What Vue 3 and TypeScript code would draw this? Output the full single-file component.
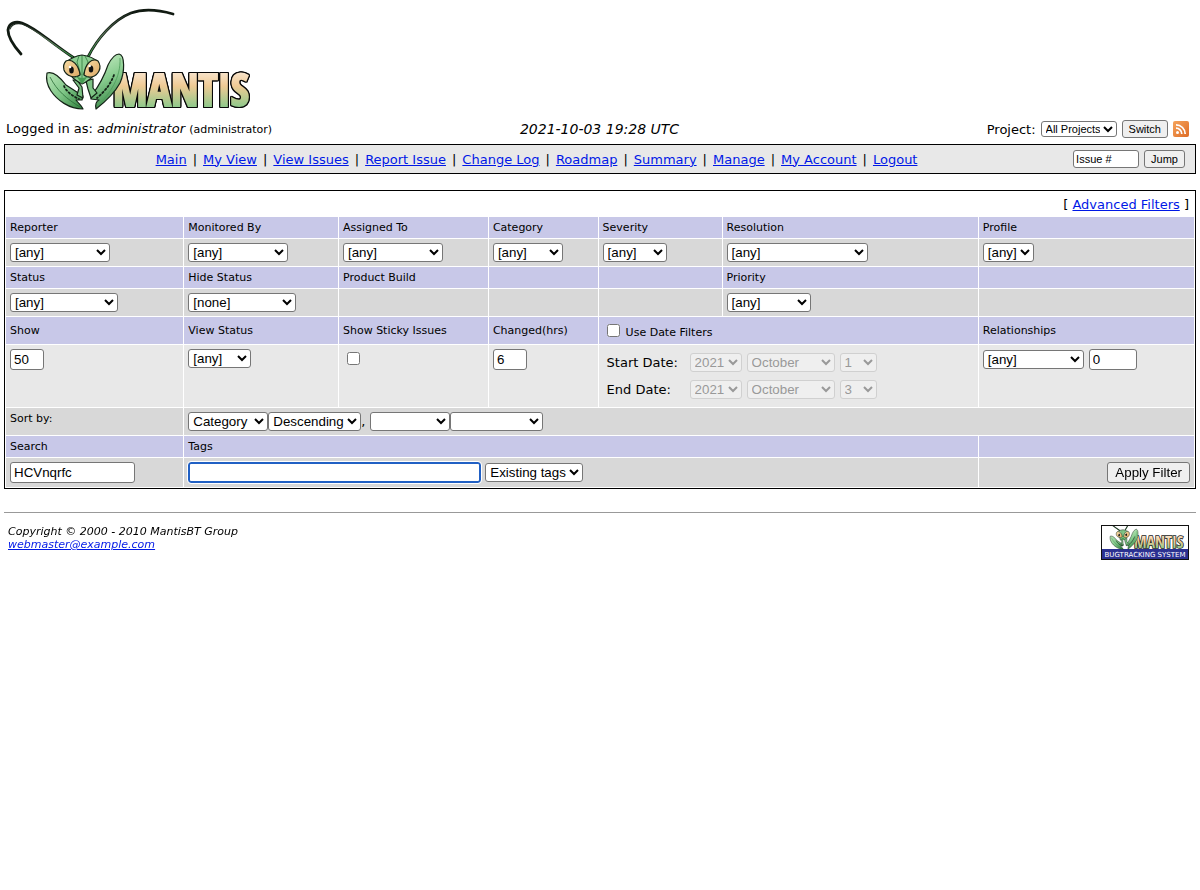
<script setup lang="ts">
import { onMounted, ref } from 'vue'

const menu: string[] = [
  'Main', 'My View', 'View Issues', 'Report Issue', 'Change Log',
  'Roadmap', 'Summary', 'Manage', 'My Account', 'Logout',
]
const dates = [
  { key: 'start', label: 'Start Date:', day: '1' },
  { key: 'end', label: 'End Date:', day: '3' },
]
const issue = ref('Issue #')
const show = ref('50')
const changed = ref('6')
const relation = ref('0')
const search = ref('HCVnqrfc')
const tags = ref('')
const tagBox = ref<HTMLInputElement | null>(null)

onMounted(() => tagBox.value?.focus())
</script>

<template>
  <div class="page">
    <svg width="0" height="0" class="defs" aria-hidden="true">
      <defs>
        <linearGradient id="word" x1="0" y1="0" x2="0" y2="1">
          <stop offset="0.2" stop-color="#f9e6d0" />
          <stop offset="0.45" stop-color="#efca94" />
          <stop offset="0.8" stop-color="#8fc98b" />
        </linearGradient>
        <linearGradient id="leaf" x1="0" y1="0" x2="1" y2="1">
          <stop offset="0" stop-color="#b9e6b8" />
          <stop offset="0.5" stop-color="#7fc687" />
          <stop offset="1" stop-color="#2f7f3c" />
        </linearGradient>
        <linearGradient id="leafRight" x1="0.2" y1="0" x2="0.5" y2="1">
          <stop offset="0" stop-color="#c6ecc3" />
          <stop offset="0.5" stop-color="#86cb8d" />
          <stop offset="1" stop-color="#398747" />
        </linearGradient>
        <linearGradient id="eye" x1="0" y1="0" x2="1" y2="1">
          <stop offset="0" stop-color="#f8dda6" />
          <stop offset="1" stop-color="#dca763" />
        </linearGradient>
        <linearGradient id="feeler" x1="0" y1="0" x2="0" y2="1">
          <stop offset="0" stop-color="#1b261c" />
          <stop offset="0.5" stop-color="#5b7a5b" />
          <stop offset="1" stop-color="#2f8a3d" />
        </linearGradient>
        <linearGradient id="rssFill" x1="0" y1="0" x2="1" y2="1">
          <stop offset="0" stop-color="#f5a45c" />
          <stop offset="1" stop-color="#de6c26" />
        </linearGradient>
        <g id="mantis">
          <g fill="none" stroke-linecap="round">
            <path d="M21 54C12 44 8 36 8 30C9 23 15 21 22 23C36 28 46 39 74 58" stroke="#111a12" stroke-width="2.8" />
            <path d="M10 29C12 24 17 23 22 24C36 29 46 40 74 58" stroke="url(#feeler)" stroke-width="1.2" />
            <path d="M88 57C97 39 113 20 131 13C145 8 159 10 173 14" stroke="#111a12" stroke-width="2.8" />
            <path d="M88 57C97 39 113 20 131 13" stroke="url(#feeler)" stroke-width="1.2" />
          </g>
          <g stroke="#142317" stroke-width="1.2" stroke-linejoin="round">
            <path d="M119 54C125 55 125 72 120 83C114 94 105 102 96 109C95 104 97 101 99 100L91 99L92 95C98 87 104 77 108 65C111 59 115 54 119 54Z" fill="url(#leafRight)" />
            <path d="M120 58C121 78 110 93 98 106" fill="none" stroke="#4d9a59" stroke-width="0.8" />
            <path d="M47 73C53 71 60 77 66 85L83 96L82 100L76 100C79 104 82 106 83 109C69 109 57 100 51 91C47 85 46 78 47 73Z" fill="url(#leaf)" />
            <path d="M50 77C57 91 67 99 80 107" fill="none" stroke="#2b6c37" stroke-width="0.8" />
            <path d="M77 80L82 87L83 98L77 95L79 88L73 80Z" fill="#7dc384" />
            <path d="M86 81L93 79L93 88L97 93L91 98L88 89Z" fill="#7dc384" />
          </g>
          <g fill="none" stroke="#142317" stroke-width="1.8" stroke-linecap="round" stroke-dasharray="1.6 2.4">
            <path d="M64 86C66 91 72 96 79 99" />
            <path d="M114 75C110 85 105 91 97 98" />
          </g>
          <g stroke="#142317" stroke-width="1.2" stroke-linejoin="round">
            <path d="M66 62C70 59 74 56 82 55C90 56 95 59 98 62C98 71 93 79 82 84C72 79 66 72 66 62Z" fill="#8ccf92" />
            <path d="M82 56V82M79 56L77 62L81 75M85 56L88 62L83 75" fill="none" stroke="#317a3e" stroke-width="0.8" />
            <path d="M66 61C72 58 79 65 80 75C75 79 66 76 64 70C63 66 64 63 66 61Z" fill="url(#eye)" />
            <path d="M98 61C92 57 85 64 84 75C89 79 96 77 99 71C101 67 100 64 98 61Z" fill="url(#eye)" />
            <path d="M76 76Q82 80 88 76L82 84Z" fill="#479d53" stroke="none" />
          </g>
          <ellipse cx="71.5" cy="70" rx="2.3" ry="3.6" fill="#101010" />
          <ellipse cx="91" cy="69" rx="2.3" ry="3.6" fill="#101010" />
          <circle cx="70" cy="67" r="1.3" fill="#fff" />
          <circle cx="89.6" cy="66" r="1.3" fill="#fff" />
        </g>
      </defs>
    </svg>

    <header>
      <svg class="logo" viewBox="4 4 260 114" role="img" aria-label="Mantis">
        <text x="113" y="106" class="wordmark">MANTIS</text>
        <use href="#mantis" />
      </svg>
    </header>

    <div class="status">
      <div>Logged in as: <i>administrator</i> <small>(administrator)</small></div>
      <i class="clock">2021-10-03 19:28 UTC</i>
      <form class="project" @submit.prevent>
        <label for="project">Project:</label>
        <select id="project" class="mini"><option>All Projects</option></select>
        <button class="mini-btn">Switch</button>
        <a href="#rss" class="rss" aria-label="RSS">
          <svg viewBox="0 0 16 16">
            <rect width="16" height="16" rx="2" fill="url(#rssFill)" />
            <circle cx="4.5" cy="11.5" r="1.5" fill="#fff" />
            <path d="M3 7.2A5.8 5.8 0 0 1 8.8 13M3 3.8A9.2 9.2 0 0 1 12.2 13" fill="none" stroke="#fff" stroke-width="1.7" />
          </svg>
        </a>
      </form>
    </div>

    <div class="bar">
      <nav>
        <template v-for="(item, i) in menu" :key="item">
          <span v-if="i">|</span>
          <a href="#">{{ item }}</a>
        </template>
      </nav>
      <form class="jump" @submit.prevent>
        <input v-model="issue" class="mini-input" aria-label="Issue number">
        <button class="mini-btn">Jump</button>
      </form>
    </div>

    <form @submit.prevent>
      <table class="filters">
        <colgroup>
          <col class="c1"><col class="c2"><col class="c3"><col class="c4"><col class="c5"><col class="c6"><col>
        </colgroup>
        <tbody>
          <tr>
            <td colspan="7" class="advanced">[ <a href="#">Advanced Filters</a> ]</td>
          </tr>
          <tr class="head">
            <td><label for="reporter">Reporter</label></td>
            <td><label for="monitor">Monitored By</label></td>
            <td><label for="assigned">Assigned To</label></td>
            <td><label for="category">Category</label></td>
            <td><label for="severity">Severity</label></td>
            <td><label for="resolution">Resolution</label></td>
            <td><label for="profile">Profile</label></td>
          </tr>
          <tr class="dark">
            <td><select id="reporter" class="w100"><option>[any]</option></select></td>
            <td><select id="monitor" class="w100"><option>[any]</option></select></td>
            <td><select id="assigned" class="w100"><option>[any]</option></select></td>
            <td><select id="category" class="w70"><option>[any]</option></select></td>
            <td><select id="severity" class="w64"><option>[any]</option></select></td>
            <td><select id="resolution" class="w141"><option>[any]</option></select></td>
            <td><select id="profile" class="w51"><option>[any]</option></select></td>
          </tr>
          <tr class="head">
            <td><label for="state">Status</label></td>
            <td><label for="hide">Hide Status</label></td>
            <td>Product Build</td>
            <td></td>
            <td></td>
            <td><label for="priority">Priority</label></td>
            <td></td>
          </tr>
          <tr class="dark">
            <td><select id="state" class="w108"><option>[any]</option></select></td>
            <td><select id="hide" class="w108"><option>[none]</option></select></td>
            <td></td>
            <td></td>
            <td></td>
            <td><select id="priority" class="w84"><option>[any]</option></select></td>
            <td></td>
          </tr>
          <tr class="head tall">
            <td><label for="show">Show</label></td>
            <td><label for="view">View Status</label></td>
            <td><label for="sticky">Show Sticky Issues</label></td>
            <td><label for="changed">Changed(hrs)</label></td>
            <td colspan="2">
              <div class="check"><input id="usedate" type="checkbox"><label for="usedate">Use Date Filters</label></div>
            </td>
            <td><label for="relation">Relationships</label></td>
          </tr>
          <tr class="light">
            <td><input id="show" v-model="show" class="w34"></td>
            <td><select id="view" class="w63"><option>[any]</option></select></td>
            <td><input id="sticky" type="checkbox"></td>
            <td><input id="changed" v-model="changed" class="w34"></td>
            <td colspan="2">
              <div v-for="d in dates" :key="d.key" class="date">
                <label :for="d.key">{{ d.label }}</label>
                <select :id="d.key" class="w52" disabled><option>2021</option></select>
                <select class="w88" disabled :aria-label="d.label + ' month'"><option>October</option></select>
                <select class="w37" disabled :aria-label="d.label + ' day'"><option>{{ d.day }}</option></select>
              </div>
            </td>
            <td>
              <div class="line">
                <select id="relation" class="w101"><option>[any]</option></select>
                <input v-model="relation" class="w48" aria-label="Related issue">
              </div>
            </td>
          </tr>
          <tr class="dark">
            <td><label for="sort">Sort by:</label></td>
            <td colspan="6">
              <div class="sort">
                <select id="sort" class="w80"><option>Category</option></select>
                <select class="w93" aria-label="Sort direction"><option>Descending</option></select>
                <span class="comma">,</span>
                <select class="w80" aria-label="Second sort field"><option></option></select>
                <select class="w93" aria-label="Second sort direction"><option></option></select>
              </div>
            </td>
          </tr>
          <tr class="head">
            <td><label for="search">Search</label></td>
            <td colspan="5"><label for="tags">Tags</label></td>
            <td></td>
          </tr>
          <tr class="dark">
            <td><input id="search" v-model="search" class="w125"></td>
            <td colspan="5">
              <div class="line tag-line">
                <input id="tags" ref="tagBox" v-model="tags" class="w293">
                <select class="w98" aria-label="Existing tags"><option>Existing tags</option></select>
              </div>
            </td>
            <td class="right"><button class="apply">Apply Filter</button></td>
          </tr>
        </tbody>
      </table>
    </form>

    <footer>
      <address>
        Copyright © 2000 - 2010 MantisBT Group<br>
        <a href="mailto:webmaster@example.com">webmaster@example.com</a>
      </address>
      <a href="#" class="badge" aria-label="Mantis Bugtracking System">
        <svg viewBox="0 0 88 35">
          <rect width="88" height="35" fill="#111" />
          <rect x="1" y="1" width="86" height="23" fill="#fff" />
          <rect x="1" y="24" width="86" height="10" fill="#2b3191" />
          <text x="33" y="23" class="badge-word">MANTIS</text>
          <svg x="1" y="1" width="44" height="24" viewBox="40 45 90 66">
            <use href="#mantis" />
          </svg>
          <text x="44" y="32" class="badge-line">BUGTRACKING SYSTEM</text>
        </svg>
      </a>
    </footer>
  </div>
</template>

<style>
body { margin: 0; background: #fff; }
</style>

<style scoped>
.page {
  padding: 4px;
  font: 13px/17px Verdana, "DejaVu Sans", sans-serif;
  color: #000;
}
.defs { position: absolute; }
.logo { display: block; width: 260px; height: 114px; }
.wordmark {
  font: bold 44px "Liberation Sans Narrow", "Open Sans Condensed", "Roboto Condensed", "DejaVu Sans Condensed", sans-serif;
  fill: url(#word);
  stroke: url(#word);
  stroke-width: 2px;
  filter: drop-shadow(1px 0 0 #080808) drop-shadow(-1px 0 0 #080808) drop-shadow(0 1px 0 #080808) drop-shadow(0 -1px 0 #080808);
}
a { color: #0018e6; }
small { font-size: 11px; }
.status {
  display: grid;
  grid-template-columns: 1fr auto 1fr;
  align-items: center;
  height: 22px;
  padding: 0 7px 0 2px;
  margin-bottom: 4px;
}
.clock { font-size: 14px; padding-left: 4px; }
.project { display: flex; justify-content: flex-end; align-items: center; gap: 5px; }
.rss, .rss svg { display: block; width: 16px; height: 16px; }
.bar {
  display: flex;
  align-items: center;
  height: 28px;
  border: 1px solid #000;
  background: #e8e8e8;
}
nav { flex: 1; display: flex; justify-content: center; gap: 6px; white-space: nowrap; }
.jump { display: flex; gap: 5px; padding: 0 10px 0 5px; }

select, input, button {
  box-sizing: border-box;
  font-family: "Liberation Sans", Arial, sans-serif;
  color: #000;
  margin: 0;
}
select {
  display: block;
  height: 19px;
  border: 1px solid #767676;
  border-radius: 3px;
  background-color: #fff;
}
select:disabled { color: #999; border-color: #d0d0d0; background-color: #efefef; opacity: 1; }
input:not([type="checkbox"]) {
  display: block;
  height: 21px;
  padding: 1px 3px;
  border: 1px solid #767676;
  border-radius: 3px;
  background: #fff;
}
input[type="checkbox"] { display: block; margin: 3px 4px; }
button {
  height: 21px;
  padding: 0 7px;
  border: 1px solid #767676;
  border-radius: 3px;
  background: #efefef;
}
.mini { width: 76px; height: 16px; font-size: 11px; }
.mini-btn { height: 18px; padding: 0 6px; font-size: 11px; }
input.mini-input:not([type="checkbox"]) { width: 66px; height: 18px; padding: 1px 2px; font-size: 11px; }

.filters {
  width: 100%;
  margin-top: 16px;
  table-layout: fixed;
  border: 1px solid #000;
  border-collapse: separate;
  border-spacing: 1px;
}
.c1 { width: 15%; }
.c2 { width: 13%; }
.c3 { width: 12.6%; }
.c4 { width: 9.2%; }
.c5 { width: 10.4%; }
.c6 { width: 21.6%; }
td { padding: 4px; vertical-align: top; font-size: 11px; line-height: 13px; }
td.advanced { padding: 5px 5px 3px; text-align: right; font-size: 13px; line-height: 16px; }
.head td { background: #c8c8e8; vertical-align: middle; }
.dark td { background: #d8d8d8; height: 19px; }
.light td { background: #e8e8e8; }
.tall td { height: 19px; }
.check { display: flex; align-items: center; gap: 2px; }
.check label { padding-top: 4px; }
.check input[type="checkbox"] { margin: 0 4px; }
.date { display: flex; gap: 5px; padding: 4px; font-size: 13px; line-height: 19px; }
.date label { width: 78px; }
.line { display: flex; align-items: center; gap: 5px; }
.tag-line { gap: 4px; }
.sort { display: flex; }
.comma { width: 9px; font-size: 13px; line-height: 19px; }
.right button { display: block; margin-left: auto; }
#tags:focus { border: 2px solid #2160c4; outline: 1px solid #fff; outline-offset: 0; padding: 0 2px; }

.w34 { width: 34px; }
.w37 { width: 37px; }
.w48 { width: 48px; }
.w51 { width: 51px; }
.w52 { width: 52px; }
.w63 { width: 63px; }
.w64 { width: 64px; }
.w70 { width: 70px; }
.w80 { width: 80px; }
.w84 { width: 84px; }
.w88 { width: 88px; }
.w93 { width: 93px; }
.w98 { width: 98px; }
.w100 { width: 100px; }
.w101 { width: 101px; }
.w108 { width: 108px; }
.w125 { width: 125px; }
.w141 { width: 141px; }
.w293 { width: 293px; }

footer {
  display: flex;
  justify-content: space-between;
  margin-top: 23px;
  padding: 12px 7px 0 4px;
  border-top: 1px solid #999;
}
address { font-size: 11px; line-height: 13px; }
.badge, .badge svg { display: block; }
.badge > svg { width: 88px; height: 35px; }
.badge-word {
  font: bold 16px "Liberation Sans Narrow", "Open Sans Condensed", "Roboto Condensed", "DejaVu Sans Condensed", sans-serif;
  fill: url(#word);
  stroke: #222;
  stroke-width: 1.5px;
  paint-order: stroke;
}
.badge-line { font: 7px "DejaVu Sans", sans-serif; fill: #fff; text-anchor: middle; }
</style>
